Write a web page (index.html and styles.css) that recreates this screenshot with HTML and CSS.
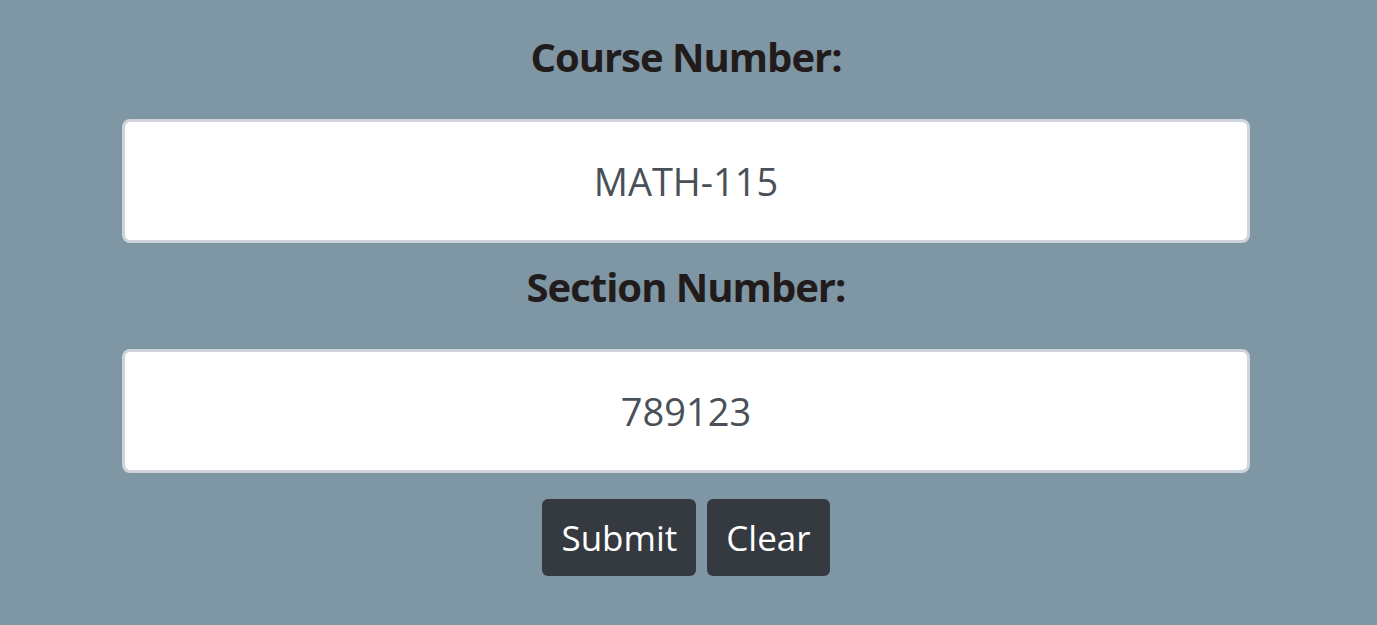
FILE: index.html
```html
<!DOCTYPE html>
<html lang="en">
<head>
<meta charset="utf-8">
<title>Course Lookup</title>
<link rel="stylesheet" href="styles.css">
</head>
<body>
<form class="form">
  <label class="label" for="course">Course Number:</label>
  <input class="field" id="course" type="text" value="MATH-115">
  <label class="label" for="section">Section Number:</label>
  <input class="field" id="section" type="text" value="789123">
  <div class="actions">
    <button type="button" class="btn">Submit</button>
    <button type="button" class="btn">Clear</button>
  </div>
</form>
</body>
</html>
```

FILE: styles.css
```css
html, body {
  margin: 0;
  padding: 0;
  background: #7f96a5;
  height: 100%;
}
body {
  font-family: "Open Sans", "Noto Sans", sans-serif;
}
.form {
  width: 1128px;
  margin-left: 122px;
  padding-top: 13px;
  display: flex;
  flex-direction: column;
  align-items: stretch;
  text-align: center;
}
.label {
  display: block;
  height: 106px;
  box-sizing: border-box;
  padding-top: 16px;
  font-size: 40px;
  line-height: 55px;
  letter-spacing: -1px;
  font-weight: 700;
  color: #221b1b;
}
.field {
  display: block;
  box-sizing: border-box;
  width: 100%;
  height: 124px;
  border: 3px solid #ced4da;
  border-radius: 8px;
  background: #fff;
  font-family: inherit;
  font-size: 38px;
  color: #495057;
  text-align: center;
  padding: 0 12px;
  outline: none;
}
.actions {
  display: flex;
  justify-content: center;
  gap: 11px;
  margin-top: 26px;
}
.btn {
  height: 77px;
  padding: 0 19px;
  border: none;
  border-radius: 6px;
  background: #343a40;
  color: #fff;
  font-family: inherit;
  font-size: 35px;
  cursor: pointer;
}
```
